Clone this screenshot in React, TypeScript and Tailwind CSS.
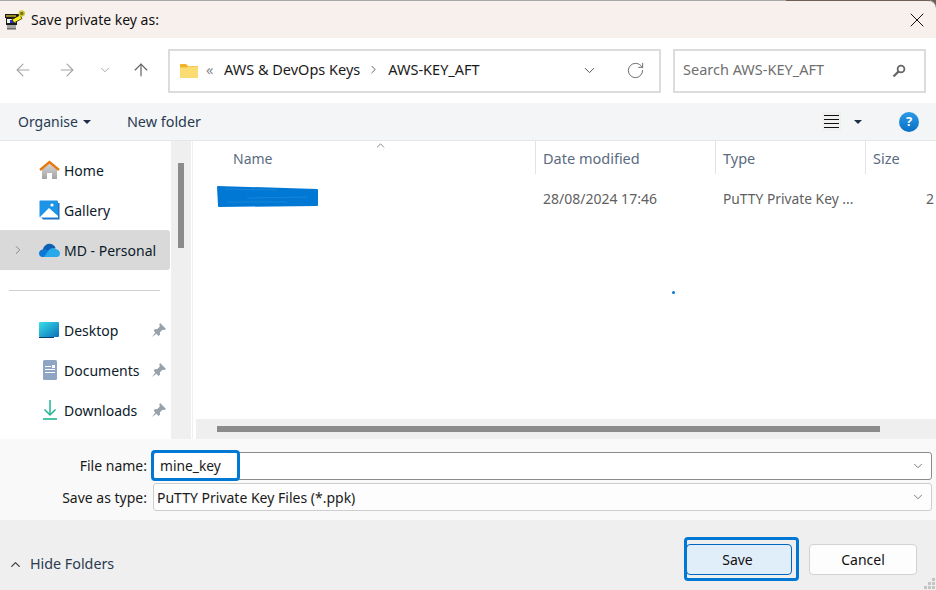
import { ArrowLeft, ArrowRight, ArrowUp, ChevronDown, ChevronRight, ChevronUp, RotateCw, X } from 'lucide-react';

function PuttyIcon() {
  return (
    <svg width="20" height="20" viewBox="0 0 20 20" shapeRendering="crispEdges">
      <rect x="0" y="4" width="15" height="4" fill="#1c1c1c" />
      <rect x="1" y="5" width="10" height="2" fill="#9a8a24" />
      <rect x="1" y="8" width="11" height="6" fill="#1c1c1c" />
      <rect x="2" y="9" width="9" height="4" fill="#f4f4f4" />
      <rect x="5" y="10" width="5" height="3" fill="#1f35c8" />
      <rect x="1" y="14" width="11" height="1" fill="#1c1c1c" />
      <rect x="2" y="15" width="9" height="5" fill="#a6a6a6" />
      <rect x="2" y="18" width="9" height="1" fill="#6e6e6e" />
      <path d="M7 9.5 L15 5 L17 8.5 L9 13 Z" fill="#fbee14" stroke="#20200c" strokeWidth="0.8" shapeRendering="auto" />
      <circle cx="16.8" cy="3.4" r="2.5" fill="#77721e" stroke="#d3c83a" strokeWidth="1.5" shapeRendering="auto" />
    </svg>
  );
}

function HomeIcon() {
  return (
    <svg width="21" height="20" viewBox="0 0 21 20">
      <defs>
        <linearGradient id="homeWall" x1="0" y1="0" x2="0" y2="1">
          <stop offset="0" stopColor="#d6d6d6" />
          <stop offset="1" stopColor="#a4a4a4" />
        </linearGradient>
      </defs>
      <path d="M3 9 L10.5 3 L18 9 V19 H13 V13 H8 V19 H3 Z" fill="url(#homeWall)" />
      <path d="M1 10 L10.5 2 L20 10" fill="none" stroke="#e8790c" strokeWidth="2.4" />
    </svg>
  );
}

function GalleryIcon() {
  return (
    <svg width="21" height="20" viewBox="0 0 21 20">
      <path d="M2 17 H19 V3 H20.5 V19.5 H4 Z" fill="#1c73c4" />
      <rect x="0.5" y="0.5" width="18.5" height="17" rx="1" fill="#1e94e6" />
      <path d="M0.5 17.5 L10 8 L19 16 V17.5 Z" fill="#fff" />
      <circle cx="13" cy="5" r="1.6" fill="#fff" />
    </svg>
  );
}

function CloudIcon() {
  return (
    <svg width="21" height="14" viewBox="0 0 21 14">
      <path d="M4 6 C5 2 9 0 12 1 C14 1.5 16 3 16.5 5 L9 11 L2 9 Z" fill="#0d5fb3" />
      <path d="M3.5 14 C1 14 0 12 0 10.5 C0 8 2 6.5 4.5 6.5 C7 6 9 7 10 9 L13 14 Z" fill="#0f78d4" />
      <path d="M5 14 L9 8 C11 5 15 4 17 6 C19.5 6.5 21 8.5 21 10.5 C21 12.5 19.5 14 18 14 Z" fill="#28a8ea" />
    </svg>
  );
}

function DesktopIcon() {
  return (
    <svg width="21" height="16" viewBox="0 0 21 16">
      <defs>
        <linearGradient id="desk" x1="0" y1="0" x2="1" y2="1">
          <stop offset="0" stopColor="#3ae0ea" />
          <stop offset="1" stopColor="#0a6fb8" />
        </linearGradient>
      </defs>
      <rect width="20" height="15" rx="1" fill="url(#desk)" />
      <rect y="15" width="15" height="1" fill="#0a3f70" />
    </svg>
  );
}

function DocumentsIcon() {
  return (
    <svg width="14" height="20" viewBox="0 0 14 20">
      <rect width="14" height="20" rx="1.5" fill="#8ea6c4" />
      <rect x="2" y="6" width="6" height="1" fill="#fff" />
      <rect x="9" y="5" width="3" height="3" fill="#fff" />
      <rect x="2" y="9" width="10" height="1" fill="#fff" />
      <rect x="2" y="12" width="10" height="1" fill="#fff" />
    </svg>
  );
}

function DownloadsIcon() {
  return (
    <svg width="14" height="20" viewBox="0 0 14 20" fill="none" stroke="#1fb592">
      <path d="M7 0 V15" strokeWidth="1.5" />
      <path d="M1.5 9.5 L7 15 L12.5 9.5" strokeWidth="1.5" />
      <path d="M0 19 H14" strokeWidth="1.6" />
    </svg>
  );
}

function PinIcon() {
  return (
    <svg width="14" height="14" viewBox="0 0 13 13" fill="#98a1a9">
      <path d="M7.5 0 L13 5.5 L11.5 6.5 L9.8 6.2 L7.4 8.6 L7.4 11 L6 12 L1.5 7 L2.5 5.8 L5 5.6 L7.3 3.3 L6.8 1.5 Z" />
      <path d="M3.5 8.2 L0 13 L4.8 9.5 Z" />
    </svg>
  );
}

function FolderIcon() {
  return (
    <svg width="18" height="14" viewBox="0 0 18 14">
      <path d="M0 1 C0 .4 .4 0 1 0 H6 L8 2 H18 V14 H0 Z" fill="#f0b429" />
      <path d="M0 3.5 H7 L8 2.5 H18 V14 H0 Z" fill="#fbdc72" />
    </svg>
  );
}

function SearchGlass() {
  return (
    <svg width="14" height="14" viewBox="0 0 14 14" fill="none" stroke="#666">
      <circle cx="9" cy="5" r="3.4" strokeWidth="1.8" />
      <path d="M6.4 7.6 L1.5 12.5" strokeWidth="2.2" />
    </svg>
  );
}

function NavRow({
  icon,
  label,
  pinned,
  selected,
}: {
  icon: React.ReactNode;
  label: string;
  pinned?: boolean;
  selected?: boolean;
}) {
  return (
    <div className={`flex h-10 items-center rounded-r-[3px] ${selected ? 'bg-[#d9d9d9]' : ''}`}>
      <div className="flex w-[39px] justify-center pr-[3px]">
        {selected && <ChevronRight size={14} strokeWidth={1.5} className="text-[#7a7a7a]" />}
      </div>
      <div className="flex w-[21px] justify-center">{icon}</div>
      <span className="ml-[4px] flex-1 pt-px text-[#0d1a2a]">{label}</span>
      {pinned && (
        <div className="mr-[4px]">
          <PinIcon />
        </div>
      )}
    </div>
  );
}

function HeaderCell({ width, label, border = true }: { width: string; label: string; border?: boolean }) {
  return (
    <div className={`flex h-[33px] items-center pl-[7px] pt-[2px] text-[14.5px] text-[#5a6b80] ${width} ${border ? 'border-r border-[#e3e3e3]' : ''}`}>
      {label}
    </div>
  );
}

export default function App() {
  return (
    <div className="relative flex h-[590px] w-[936px] flex-col overflow-hidden bg-[#6e5e54] font-['Noto_Sans',sans-serif] text-[14px] leading-none text-[#1a1a1a]">
      {/* Title bar */}
      <div className="flex h-[38px] items-center justify-between rounded-tr-[8px] border-t border-[#a8a8a8] bg-[#f8f0ec] pl-[5px] pr-[7px]">
        <div className="flex items-center gap-[6px]">
          <PuttyIcon />
          <span className="text-[#111]">Save private key as:</span>
        </div>
        <X size={24} strokeWidth={1} className="text-[#111]" />
      </div>
      <div className="absolute left-[786px] right-[6px] top-0 h-px bg-[#6e5e54]" />

      {/* Address row */}
      <div className="flex h-[65px] items-center bg-white">
        <div className="flex w-[168px] items-center pb-[2px] pl-[13px] text-[#a3a3a3]">
          <ArrowLeft size={20} strokeWidth={1.3} />
          <ArrowRight size={20} strokeWidth={1.3} className="ml-[24px]" />
          <ChevronDown size={14} strokeWidth={1.6} className="ml-[21px]" />
          <ArrowUp size={20} strokeWidth={1.4} className="ml-[19px] text-[#5f5f5f]" />
        </div>
        <div className="flex h-[44px] w-[493px] items-center border-2 border-[#dcdcdc] pl-[10px] text-[14.5px] text-[#1a1a1a]">
          <FolderIcon />
          <span className="ml-[8px] w-[18px] pb-[2px] text-[#8a8a8a]">«</span>
          <span className="pb-[2px]">AWS &amp; DevOps Keys</span>
          <ChevronRight size={13} strokeWidth={1.7} className="ml-[7px] mb-[2px] text-[#555]" />
          <span className="ml-[8px] pb-[2px]">AWS-KEY_AFT</span>
          <ChevronDown size={17} strokeWidth={1.4} className="ml-auto text-[#555]" />
          <RotateCw size={19} strokeWidth={1.2} className="ml-[28px] mr-[14px] text-[#666]" />
        </div>
        <div className="ml-[12px] flex h-[44px] w-[253px] items-center justify-between border-2 border-[#dcdcdc] pl-[8px] pr-[18px] text-[14.5px] text-[#6f6f6f]">
          <span className="pb-[2px]">Search AWS-KEY_AFT</span>
          <SearchGlass />
        </div>
      </div>

      {/* Toolbar */}
      <div className="flex h-[38px] items-center border-b border-[#e6e6e6] bg-[#f3f5f7] pl-[18px] text-[#2a3a50]">
        <span>Organise</span>
        <span className="ml-[5px] h-0 w-0 border-x-[4px] border-t-[4px] border-x-transparent border-t-[#1f2f4a]" />
        <span className="ml-[36px] pt-px text-[14.4px]">New folder</span>
        <div className="ml-auto mr-[17px] flex items-center">
          <div className="flex h-[19px] w-[19px] flex-col items-center justify-center gap-[3px] bg-[#f0f0f0]">
            <span className="h-px w-[15px] bg-[#111]" />
            <span className="h-px w-[15px] bg-[#111]" />
            <span className="h-px w-[15px] bg-[#111]" />
            <span className="h-px w-[15px] bg-[#111]" />
          </div>
          <span className="ml-[13px] h-0 w-0 border-x-[4px] border-t-[4px] border-x-transparent border-t-[#1f2f4a]" />
          <div className="ml-[37px] flex h-5 w-5 items-center justify-center rounded-full bg-gradient-to-b from-[#2a9be8] to-[#0a6fc4] text-[13px] font-bold text-white">?</div>
        </div>
      </div>

      {/* Content */}
      <div className="flex min-h-0 flex-1 bg-white">
        <div className="w-[171px] pr-px pt-[9px]">
          <NavRow icon={<HomeIcon />} label="Home" />
          <NavRow icon={<GalleryIcon />} label="Gallery" />
          <NavRow icon={<CloudIcon />} label="MD - Personal" selected />
          <div className="mb-[19px] ml-[9px] mr-[10px] mt-[20px] h-px bg-[#d0d0d0]" />
          <NavRow icon={<DesktopIcon />} label="Desktop" pinned />
          <NavRow icon={<DocumentsIcon />} label="Documents" pinned />
          <NavRow icon={<DownloadsIcon />} label="Downloads" pinned />
        </div>
        <div className="w-5 bg-[#efefef] pl-[7px] pt-[22px]">
          <div className="h-[85px] w-[6px] bg-[#8b8b8b]" />
        </div>
        <div className="w-[2px] border-r border-[#f0f0f0]" />
        <div className="relative flex min-w-0 flex-1 flex-col">
          <ChevronUp size={13} strokeWidth={1.4} className="absolute left-[181px] top-[-2px] text-[#666]" />
          <div className="flex">
            <div className="flex h-[33px] w-[343px] items-center border-r border-[#e3e3e3] pl-[40px] pt-[2px] text-[#5a6b80]">Name</div>
            <HeaderCell width="w-[180px]" label="Date modified" />
            <HeaderCell width="w-[150px]" label="Type" />
            <HeaderCell width="w-[70px]" label="Size" border={false} />
          </div>
          <div className="flex h-[48px] items-center pt-[2px] text-[#5f5f5f]">
            <div className="w-[343px] pl-[24px]">
              <svg width="101" height="24" viewBox="0 0 101 24" className="-mt-[6px]">
                <path d="M1 3 L100 6 L100 21 L2 22 Z" fill="#0078d4" stroke="#0078d4" strokeWidth="2" strokeLinejoin="round" />
                <path d="M8 5 L60 6 M30 14 L90 13 M10 18 L70 18" stroke="#2b8fdc" strokeWidth="0.6" />
              </svg>
            </div>
            <div className="w-[180px] pl-[7px]">28/08/2024 17:46</div>
            <div className="w-[150px] whitespace-nowrap pl-[7px] text-[13.8px]">PuTTY Private Key ...</div>
            <div className="flex-1 pl-[60px]">2</div>
          </div>
          <div className="flex-1" />
          <div className="ml-[3px] flex h-5 items-center bg-[#efefef] pl-[21px]">
            <div className="h-[6px] w-[663px] bg-[#8b8b8b]" />
          </div>
          <span className="absolute left-[479px] top-[150px] h-[3px] w-[3px] rounded-full bg-[#0078d4]" />
        </div>
      </div>

      {/* Filename fields */}
      <div className="flex h-[81px] flex-col gap-[3px] bg-[#f9f9f9] pr-[4px] pt-[13px]">
        <div className="flex items-center">
          <label className="w-[147px] text-right">File name:</label>
          <div className="ml-[6px] flex h-[28px] flex-1 items-center justify-between rounded-[3px] border border-[#8a8a8a] bg-white pl-[6px] pr-[6px] text-[13.8px]">
            <span>mine_key</span>
            <ChevronDown size={14} strokeWidth={1.3} className="text-[#555]" />
          </div>
        </div>
        <div className="flex items-center">
          <label className="w-[147px] pt-px text-right">Save as type:</label>
          <div className="ml-[6px] flex h-[28px] flex-1 items-center justify-between rounded-[3px] border border-[#cdcdcd] bg-[#fdfdfd] pl-[3px] pr-[6px]">
            <span className="pt-px">PuTTY Private Key Files (*.ppk)</span>
            <ChevronDown size={14} strokeWidth={1.3} className="text-[#555]" />
          </div>
        </div>
      </div>

      {/* Footer */}
      <div className="flex h-[70px] items-center bg-[#efefef] pl-[8px] pt-[8px]">
        <div className="mt-[10px] flex items-center">
          <ChevronUp size={15} strokeWidth={2.2} className="text-[#444]" />
          <span className="ml-[7px] text-[14.3px] text-[#2a3a50]">Hide Folders</span>
        </div>
        <button className="ml-auto h-[31px] w-[106px] rounded-[4px] border border-[#0067c0] bg-[#e0eef9] pr-[3px] pt-px text-[#111]">Save</button>
        <button className="ml-[17px] mr-[19px] h-[31px] w-[108px] rounded-[4px] border border-[#d2d2d2] bg-[#fdfdfd] pt-px text-[#111]">Cancel</button>
      </div>

      {/* Annotation boxes drawn over the screenshot */}
      <div className="absolute left-[151px] top-[450px] h-[31px] w-[89px] rounded-[4px] border-[3px] border-[#0078d4]" />
      <div className="absolute left-[684px] top-[537px] h-[44px] w-[115px] rounded-[4px] border-[3px] border-[#0078d4]" />

      {/* Resize grip */}
      <svg width="12" height="12" viewBox="0 0 12 12" fill="#c4c4c4" className="absolute bottom-0 right-0" shapeRendering="crispEdges">
        <rect x="8" y="0" width="3" height="3" />
        <rect x="4" y="4" width="3" height="3" />
        <rect x="8" y="4" width="3" height="3" />
        <rect x="0" y="8" width="3" height="3" />
        <rect x="4" y="8" width="3" height="3" />
        <rect x="8" y="8" width="3" height="3" />
      </svg>
    </div>
  );
}
